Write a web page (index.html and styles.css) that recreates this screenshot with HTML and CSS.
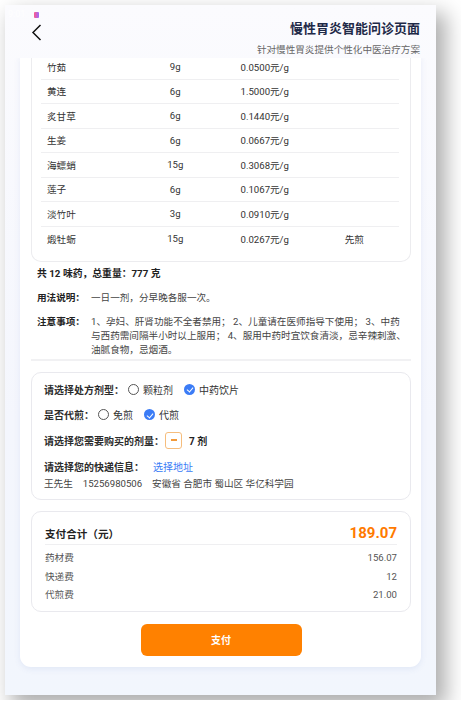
FILE: index.html
```html
<!DOCTYPE html>
<html lang="zh-CN">

<head>
    <meta charset="UTF-8">
    <meta name="viewport" content="width=device-width, initial-scale=1.0">
    <title>慢性胃炎智能问诊页面</title>
    <link rel="stylesheet" href="styles.css">
</head>

<body>
    <div class="frame">
        <div class="status-bar">
            <span class="time">9:01</span>
            <span class="status-dot"></span>
        </div>

        <header class="nav">
            <svg class="back" width="11" height="17" viewBox="0 0 11 17">
                <path d="M9.5 1 L2 8.5 L9.5 16" fill="none" stroke="#111" stroke-width="1.5" />
            </svg>
            <div class="nav-title">
                <h1>慢性胃炎智能问诊页面</h1>
                <p>针对慢性胃炎提供个性化中医治疗方案</p>
            </div>
        </header>

        <main class="scroll">
            <div class="sheet">
                <div class="herb-card">
                    <div class="herb-row"><span>竹茹</span><span>9g</span><span>0.0500元/g</span><span></span></div>
                    <div class="herb-row"><span>黄连</span><span>6g</span><span>1.5000元/g</span><span></span></div>
                    <div class="herb-row"><span>炙甘草</span><span>6g</span><span>0.1440元/g</span><span></span></div>
                    <div class="herb-row"><span>生姜</span><span>6g</span><span>0.0667元/g</span><span></span></div>
                    <div class="herb-row"><span>海螵蛸</span><span>15g</span><span>0.3068元/g</span><span></span></div>
                    <div class="herb-row"><span>莲子</span><span>6g</span><span>0.1067元/g</span><span></span></div>
                    <div class="herb-row"><span>淡竹叶</span><span>3g</span><span>0.0910元/g</span><span></span></div>
                    <div class="herb-row"><span>煅牡蛎</span><span>15g</span><span>0.0267元/g</span><span>先煎</span></div>
                </div>

                <p class="summary">共 12 味药，总重量：777 克</p>

                <div class="info-line">
                    <span class="info-label">用法说明：</span>
                    <span class="info-text">一日一剂，分早晚各服一次。</span>
                </div>
                <div class="info-line">
                    <span class="info-label">注意事项：</span>
                    <span class="info-text">1、孕妇、肝肾功能不全者禁用； 2、儿童请在医师指导下使用； 3、中药与西药需间隔半小时以上服用； 4、服用中药时宜饮食清淡，忌辛辣刺激、油腻食物，忌烟酒。</span>
                </div>

                <div class="divider"></div>

                <div class="box options">
                    <div class="opt-row">
                        <span class="opt-label">请选择处方剂型：</span>
                        <span class="radio"></span><span class="radio-text">颗粒剂</span>
                        <span class="radio checked"></span><span class="radio-text">中药饮片</span>
                    </div>
                    <div class="opt-row">
                        <span class="opt-label">是否代煎：</span>
                        <span class="radio"></span><span class="radio-text">免煎</span>
                        <span class="radio checked"></span><span class="radio-text">代煎</span>
                    </div>
                    <div class="opt-row">
                        <span class="opt-label">请选择您需要购买的剂量：</span>
                        <span class="minus"></span>
                        <span class="amount">7 剂</span>
                    </div>
                    <div class="opt-row">
                        <span class="opt-label">请选择您的快递信息：</span>
                        <span class="link">选择地址</span>
                    </div>
                    <div class="address">
                        <span>王先生</span><span>15256980506</span><span>安徽省 合肥市 蜀山区 华亿科学园</span>
                    </div>
                </div>

                <div class="box pay">
                    <div class="pay-head">
                        <span>支付合计（元）</span>
                        <span class="total">189.07</span>
                    </div>
                    <div class="fee"><span>药材费</span><span>156.07</span></div>
                    <div class="fee"><span>快递费</span><span>12</span></div>
                    <div class="fee"><span>代煎费</span><span>21.00</span></div>
                </div>

                <div class="pay-bar">
                    <button class="pay-btn">支付</button>
                </div>
            </div>
        </main>
    </div>
</body>

</html>
```

FILE: styles.css
```css
* {
    box-sizing: border-box;
}

body {
    margin: 0;
    padding: 5px;
    background: #fff;
    font-family: Roboto, "Noto Sans CJK SC", sans-serif;
    color: #333;
}

.frame {
    width: 431px;
    height: 690px;
    overflow: hidden;
    display: flex;
    flex-direction: column;
    background: linear-gradient(180deg, #fbfbfe 0%, #f4f6fd 60%, #f2f6fd 100%);
    box-shadow: 8px 10px 20px 2px rgba(0, 0, 0, 0.32);
}

.status-bar {
    height: 16px;
    display: flex;
    align-items: center;
    padding-left: 3px;
    padding-top: 3px;
}

.time {
    font-size: 9px;
    color: rgba(255, 255, 255, 0.9);
    line-height: 1;
}

.status-dot {
    width: 5px;
    height: 6px;
    margin-left: 9px;
    border-radius: 1px;
    background: linear-gradient(90deg, #ff5a8a, #9a6bff);
}

.nav {
    display: flex;
    justify-content: space-between;
    padding: 0 16px 0 26px;
    height: 37px;
}

.back {
    margin-top: 3px;
}

.nav-title {
    text-align: right;
}

.nav-title h1 {
    margin: 0;
    font-size: 13px;
    line-height: 16px;
    font-weight: 700;
    color: #1f2a48;
}

.nav-title p {
    margin: 5px 0 0;
    font-size: 9.6px;
    line-height: 16px;
    color: #666;
}

.scroll {
    flex: 1;
    overflow: hidden;
    padding: 0 15px;
}

.sheet {
    margin-top: -3px;
    background: #fff;
    border-radius: 0 0 11px 11px;
    padding: 0 10px 11px 11px;
    box-shadow: 0 2px 6px rgba(80, 110, 190, 0.1);
}

.herb-card {
    border: 1px solid #ececef;
    border-top: none;
    border-radius: 0 0 10px 10px;
    padding: 0 11px 10px 9px;
}

.herb-row {
    display: grid;
    grid-template-columns: repeat(4, 1fr);
    height: 24.5px;
    align-items: center;
    font-size: 9.6px;
    color: #333;
    border-bottom: 1px solid #efeff1;
    text-align: center;
}

.herb-row:last-child {
    border-bottom: none;
}

.herb-row span:first-child {
    text-align: left;
    padding-left: 6px;
}

.summary {
    margin: 5px 0 0 6px;
    font-size: 9.8px;
    line-height: 14px;
    font-weight: 700;
    color: #222;
}

.info-line {
    display: flex;
    margin: 10px 0 0 6px;
    font-size: 9.6px;
    line-height: 14px;
}

.info-label {
    flex: none;
    width: 54px;
    font-weight: 700;
    color: #222;
}

.info-text {
    max-width: 317px;
    color: #444;
}

.divider {
    height: 2px;
    background: #f1f1f3;
    margin-top: 2px;
}

.box {
    border: 1px solid #e9e9ee;
    border-radius: 10px;
    margin-top: 11px;
}

.options {
    padding: 7px 12px 8px;
    font-size: 10px;
}

.opt-row {
    display: flex;
    align-items: center;
    height: 18px;
    margin-bottom: 7.5px;
    color: #333;
}

.opt-label {
    font-weight: 600;
    margin-right: 4px;
    color: #2c2c2c;
}

.radio {
    width: 11px;
    height: 11px;
    border-radius: 50%;
    border: 1px solid #555;
    margin-right: 4px;
    position: relative;
}

.radio.checked {
    border: none;
    background: #3b7cf6;
}

.radio.checked::after {
    content: "";
    position: absolute;
    left: 3.5px;
    top: 2.5px;
    width: 3px;
    height: 5px;
    border: solid #fff;
    border-width: 0 1.3px 1.3px 0;
    transform: rotate(40deg);
}

.radio-text {
    margin-right: 11px;
    color: #333;
}

.minus {
    width: 17px;
    height: 17px;
    margin-left: -3px;
    border: 1px solid #f6bd7c;
    border-radius: 3px;
    display: flex;
    align-items: center;
    justify-content: center;
}

.minus::after {
    content: "";
    width: 6px;
    height: 1.5px;
    background: #f29a3a;
}

.amount {
    margin-left: 7px;
    font-weight: 700;
    color: #222;
}

.opt-row:nth-child(3) {
    margin-bottom: 8.5px;
}

.link {
    color: #3a7cf5;
    margin-left: 5px;
}

.address {
    font-size: 9.6px;
    line-height: 14px;
    color: #444;
    margin-top: -6px;
}

.address span {
    margin-right: 10px;
}

.pay {
    padding: 10px 13px 6px;
    font-size: 9.6px;
}

.pay-head {
    display: flex;
    justify-content: space-between;
    align-items: center;
    height: 22px;
    margin-bottom: 4px;
    font-size: 10.6px;
    font-weight: 700;
    color: #222;
    border-bottom: 1px solid #efeff1;
    box-sizing: content-box;
}

.total {
    font-size: 15px;
    color: #ff7a00;
}

.fee {
    display: flex;
    justify-content: space-between;
    height: 18.5px;
    line-height: 18.5px;
    color: #555;
}

.fee:first-of-type {
    margin-top: 3px;
}

.pay-bar {
    display: flex;
    justify-content: center;
    margin-top: 12px;
}

.pay-btn {
    width: 161px;
    height: 32px;
    border: none;
    border-radius: 6px;
    background: #ff8100;
    color: #fff;
    font-family: inherit;
    font-size: 10px;
    font-weight: 600;
}
```
